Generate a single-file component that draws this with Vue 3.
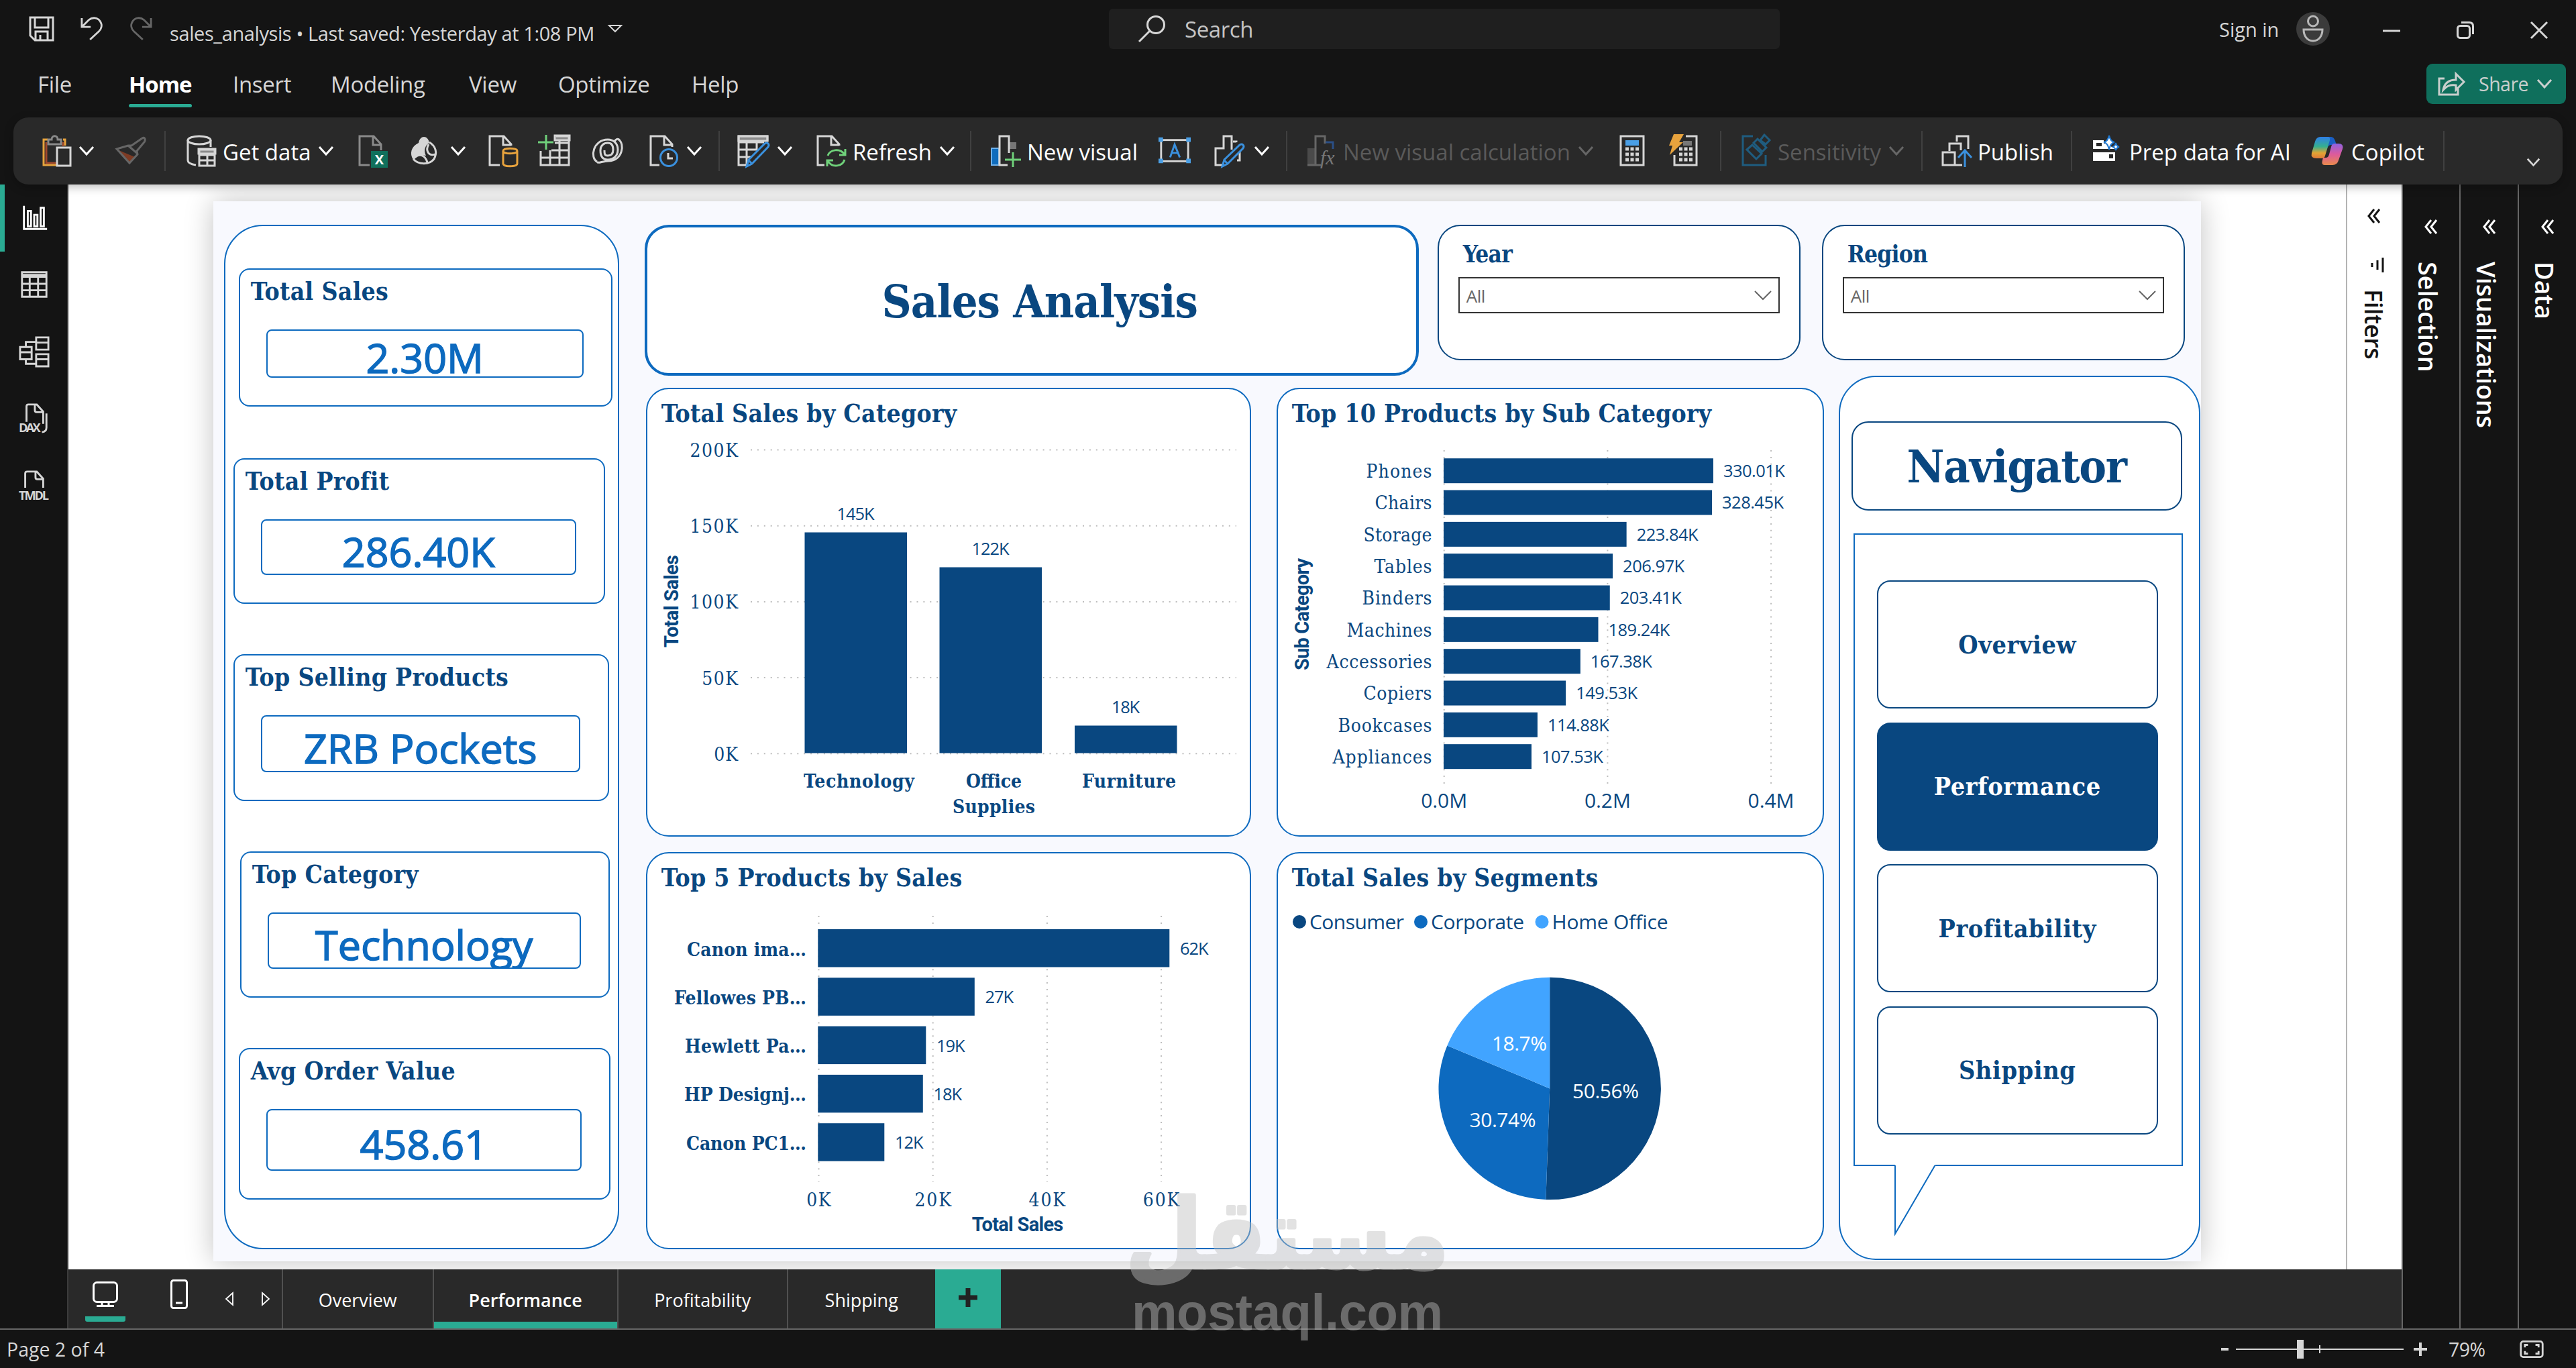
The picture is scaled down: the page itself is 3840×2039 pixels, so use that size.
<template>
  <div class="app">
    <header class="titlebar">
      <div class="quick">
        <svg class="i-save" viewBox="0 0 38 38"><path d="M2 2h34v34H9l-7-7zM9 2v15h20V2M10 36V23h18v13M17 36v-8" /></svg>
        <svg class="i-undo" viewBox="0 0 36 38"><path d="M2 2v14h14M3 15L13 5C19 0 27 1 31 7c4 6 2 12-2 16L15 36" /></svg>
        <svg class="i-redo" viewBox="0 0 36 38"><path d="M34 2v14H20M33 15L23 5C17 0 9 1 5 7c-4 6-2 12 2 16l14 13" /></svg>
        <span class="filename">sales_analysis • Last saved: Yesterday at 1:08 PM</span>
        <svg class="i-caret" viewBox="0 0 22 14"><path d="M2 2h18l-9 9z" /></svg>
      </div>
      <div class="search">
        <svg viewBox="0 0 40 40"><circle cx="26" cy="14" r="12.5" /><path d="M17 23L1 39" /></svg>
        <span>Search</span>
      </div>
      <div class="account">
        <span>Sign in</span>
        <svg class="i-avatar" viewBox="0 0 50 50">
          <circle cx="25" cy="25" r="25" class="disc" />
          <circle cx="25" cy="13.500" r="7.500" />
          <path d="M11 26h28c0 9-5 17-14 17s-14-8-14-17z" />
        </svg>
        <svg class="i-win" viewBox="0 0 26 26"><path d="M0 14h26" /></svg>
        <svg class="i-win" viewBox="0 0 26 26"><rect x="1.500" y="6.500" width="18" height="18" rx="4" /><path d="M7 1.500h12q5.500 0 5.500 5.500v12" /></svg>
        <svg class="i-win" viewBox="0 0 26 26"><path d="M1 1l24 24M25 1L1 25" /></svg>
      </div>
    </header>

    <nav class="menu">
      <a v-for="m in menu" :key="m" :class="{ active: m === 'Home' }">{{ m }}</a>
      <button class="share">
        <svg viewBox="0 0 40 36"><path d="M10 10H2v24h28V23M8 27c2-11 9-15 19-15V3l12 12-12 12v-7c-9-1-14 1-19 7z" /></svg>
        <span>Share</span>
        <svg class="chev" viewBox="0 0 24 14"><path d="M2 1l10 11L22 1" /></svg>
      </button>
    </nav>

    <div class="ribbon">
      <div class="tool">
        <svg class="ico" viewBox="0 0 48 48">
          <path class="rust" d="M7 11v31h16M32 11v6" /><path class="gold" d="M9 7H3v38h20M32 7h3v9" /><path class="line dimline" d="M10 14V7h5c0-7 9-7 9 0h5v7z" /><rect class="line" x="23" y="19" width="20" height="27" />
        </svg>
        <svg class="chev tight" viewBox="0 0 24 14"><path d="M2 1l10 11L22 1" /></svg>
      </div>
      <div class="tool dim">
        <svg class="ico" viewBox="0 0 48 48"><path class="rustfill" d="M5 23l24 10-8 9z" /><path d="M24 16L40 5q3-2 4 1t-2 6L32 24l1 5-12 13L2 21l17-5zM19 16l14 12" /></svg>
      </div>
      <i class="sep"></i>
      <div class="tool">
        <svg class="ico" viewBox="0 0 48 48">
          <ellipse cx="19" cy="8" rx="17" ry="6" /><path d="M2 8v30c0 4 5 6 12 7M36 8v10" />
          <path class="fill" d="M18 21h25v7H18z" /><path d="M19 22h23v24H19zM19 30h23M19 38h23M31 28v18" />
        </svg>
        <span>Get data</span>
        <svg class="chev" viewBox="0 0 24 14"><path d="M2 1l10 11L22 1" /></svg>
      </div>
      <div class="tool">
        <svg class="ico" viewBox="0 0 48 48">
          <path class="dimline" d="M17 45H2V2h21l11 12v9M22 2v13h12" /><rect x="19" y="24" width="25" height="25" class="excel" /><text x="31.500" y="44" class="xl">X</text>
        </svg>
      </div>
      <div class="tool">
        <svg class="ico" viewBox="0 0 48 48">
          <path class="leaf" d="M12 12C14 0 26 0 28 12c-6 3-9 11-5 19-9-2-14 0-19 6C-2 28 1 17 12 12z" />
          <path d="M28 11c10 6 12 16 7 25-7 9-23 9-31 0M27 14c-5 9-1 18 10 15M5 35c9-9 17-4 20 6" />
        </svg>
        <svg class="chev" viewBox="0 0 24 14"><path d="M2 1l10 11L22 1" /></svg>
      </div>
      <div class="tool">
        <svg class="ico" viewBox="0 0 48 48"><path d="M17 45H2V2h21l11 12v2M22 2v13h12" /><path class="amber" d="M22 24v19c0 5 21 5 21 0V24M22 24c0 5 21 5 21 0s-21-5-21 0z" /></svg>
      </div>
      <div class="tool">
        <svg class="ico" viewBox="0 0 48 48"><path class="fill" d="M25 1h22v7H25z" /><path d="M27 2h19v43H4V24M4 34h42M20 23h26M25 12h21M18 23v22M32 8v37" /><path class="green" d="M12 0v22M0 11h23" /></svg>
      </div>
      <div class="tool">
        <svg class="ico" viewBox="0 0 48 48"><path d="M7 40C-4 34 1 7 23 7c9 0 15 6 15 15s-6 15-15 15-11-7-11-14 5-11 11-11 8 4 8 10-3 9-8 9-5-3-5-8M39 7c10 6 6 32-15 32-5 0-8 1-12 2q-4 1-5-1M33 10c2-4 5-5 8-2" /></svg>
      </div>
      <div class="tool">
        <svg class="ico" viewBox="0 0 48 48"><path d="M15 45H2V2h21l11 12v4M22 2v13h12" /><circle class="blue" cx="29" cy="34" r="12.500" /><path d="M28 27v8h7" /></svg>
        <svg class="chev tight" viewBox="0 0 24 14"><path d="M2 1l10 11L22 1" /></svg>
      </div>
      <i class="sep"></i>
      <div class="tool">
        <svg class="ico" viewBox="0 0 48 48"><path class="fill" d="M2 2h43v7H2z" /><path d="M14 45H2V2h43v8M2 11h38M2 22h28M2 33h20M14 11v34M29 11v11" /><path class="blue" d="M14 47l3-10 24-24q3-2 5 0t0 5L22 43zM17 38l5 5" /></svg>
        <svg class="chev" viewBox="0 0 24 14"><path d="M2 1l10 11L22 1" /></svg>
      </div>
      <div class="tool">
        <svg class="ico" viewBox="0 0 48 48"><path d="M12 45H2V2h21l11 12v2M22 2v13h12" /><path class="green" d="M17 31c3-9 18-12 25-2M43 21v9h-9M42 37c-3 10-18 13-25 2M16 47v-9h9" /></svg>
        <span>Refresh</span>
        <svg class="chev" viewBox="0 0 24 14"><path d="M2 1l10 11L22 1" /></svg>
      </div>
      <i class="sep"></i>
      <div class="tool">
        <svg class="ico" viewBox="0 0 48 48"><path class="bluefill" d="M1 20h11v25H1z" /><path class="greyfill" d="M28 11h10v10H28z" /><path d="M27 27V2H13v43h12" /><path class="green" d="M33 26v22M21 37h24" /></svg>
        <span>New visual</span>
      </div>
      <div class="tool">
        <svg class="ico" viewBox="0 0 50 48"><rect x="4" y="7" width="42" height="33" /><path class="bluesolid" d="M0 3h7v7H0zM43 3h7v7h-7zM0 36h7v7H0zM43 36h7v7h-7z" /><path class="blue" d="M18 34l7-20 8 20M21 27h9" /></svg>
      </div>
      <div class="tool">
        <svg class="ico" viewBox="0 0 48 48"><path d="M15 45H2V20h12V2h12v20M33 11v-1h-5M34 38h4v-13M2 32v13" /><path class="blue" d="M12 47l3-10 23-22q3-2 5 0t0 5L20 43zM15 38l5 5" /></svg>
        <svg class="chev" viewBox="0 0 24 14"><path d="M2 1l10 11L22 1" /></svg>
      </div>
      <i class="sep"></i>
      <div class="tool dim">
        <svg class="ico" viewBox="0 0 48 48"><path class="greyfill" d="M1 20h11v25H1z" /><path d="M27 13V2H13v43h8M1 45h12" /><path d="M28 11h11v10" class="navy" /><text x="20" y="44" class="fx">fx</text></svg>
        <span>New visual calculation</span>
        <svg class="chev" viewBox="0 0 24 14"><path d="M2 1l10 11L22 1" /></svg>
      </div>
      <div class="tool">
        <svg class="ico" viewBox="0 0 48 48"><rect x="2" y="2" width="34" height="43" /><path class="bluesolid" d="M9 8h20v8H9z" /><path class="keys" d="M9 21h20M9 29h20M9 37h20" /></svg>
      </div>
      <div class="tool">
        <svg class="ico" viewBox="0 0 48 48"><path d="M25 2h16v43H8V30" /><path class="greyfill" d="M21 9h13v7H21z" /><path class="keys" d="M15 21h20M15 29h20M15 37h20" /><path class="goldfill" d="M7-1h15l-7 12h6L1 30l4-14H0z" /></svg>
      </div>
      <i class="sep"></i>
      <div class="tool dim">
        <svg class="ico" viewBox="0 0 48 48"><path class="teal" d="M17 2H2v43h34V30M8 22l8-7 14 13-8 8zM18 12l6-6 13 13-6 6zM28 8l6-8 8 8-6 6z" /></svg>
        <span>Sensitivity</span>
        <svg class="chev" viewBox="0 0 24 14"><path d="M2 1l10 11L22 1" /></svg>
      </div>
      <i class="sep"></i>
      <div class="tool">
        <svg class="ico" viewBox="0 0 48 48"><path d="M23 10V2h17v19M12 24V13h17v10M31 45H2V26h18v19M29 13v8" /><path class="blue" d="M35 48V24M25 34l10-11 10 11" /></svg>
        <span>Publish</span>
      </div>
      <i class="sep"></i>
      <div class="tool">
        <svg class="ico" viewBox="0 0 48 48"><path class="white" d="M0 8h16v5h5l7 5h5v3H0zM0 26h33v13H0z" /><path class="dark" d="M5 12h8v5H5zM24 29h6v6h-6z" /><path class="spark" d="M24 1q2 9 8 10-6 1-8 11-2-10-8-11 6-1 8-10zM34 12q1 5 5 6-4 1-5 5-1-4-5-5 4-1 5-6z" /></svg>
        <span>Prep data for AI</span>
      </div>
      <div class="tool">
        <svg class="ico" viewBox="0 0 48 48">
          <defs>
            <linearGradient id="cpA" x1="0" y1="0" x2="0" y2="1"><stop offset="0" stop-color="#2f7fe8" /><stop offset=".45" stop-color="#35b08f" /><stop offset=".75" stop-color="#e2a433" /><stop offset="1" stop-color="#e07a3a" /></linearGradient>
            <linearGradient id="cpB" x1="0" y1="0" x2="0" y2="1"><stop offset="0" stop-color="#8f62e0" /><stop offset=".5" stop-color="#dd5a9b" /><stop offset="1" stop-color="#e98a4c" /></linearGradient>
          </defs>
          <path class="solid" fill="#1a5fc4" d="M22 3h8q4 0 6 6l2 6h-8q-4 0-6 5z" />
          <path class="solid" fill="url(#cpA)" d="M14 3h11q4 0 3 5l-7 23q-1 4-5 4H8q-9 0-7-8L6 10q2-7 8-7z" />
          <path class="solid" fill="url(#cpB)" d="M35 13h6q8 0 6 8l-6 17q-2 7-9 7H20q-5 0-3-7l1-4h4q4 0 5-5l3-11q1-5 5-5z" />
        </svg>
        <span class="wide">Copilot</span>
      </div>
      <i class="sep"></i>
      <svg class="chev collapse" viewBox="0 0 24 14"><path d="M2 1l10 11L22 1" /></svg>
    </div>

    <div class="body">
      <aside class="rail">
        <div class="rail-item active">
          <svg viewBox="0 0 48 48"><path d="M8 6v36h36M14 14h5v24h-5zM24 20h5v18h-5zM34 9h5v29h-5z" /></svg>
        </div>
        <div class="rail-item">
          <svg viewBox="0 0 48 48"><path d="M5 5h38v38H5zM5 12h38M5 23h38M5 33h38M17 12v31M30 12v31M5 9h38" /></svg>
        </div>
        <div class="rail-item">
          <svg viewBox="0 0 48 48"><path d="M2 17h18v19H2zM2 25h18M27 2h19v19H27zM27 10h19M27 28h19v19H27zM27 36h19M11 17v-8h16M11 36v7h16" /></svg>
        </div>
        <div class="rail-item">
          <svg viewBox="0 0 48 48"><path d="M12 29V5q0-3 3-3h13l10 11v14M25 2v9q0 3 3 3h10M43 16v22q0 6-7 7M38 27v5" /><text x="0" y="45" textLength="34">DAX</text></svg>
        </div>
        <div class="rail-item">
          <svg viewBox="0 0 48 48"><path d="M10 27V5q0-3 3-3h15l10 11v14M26 2v9q0 3 3 3h9" /><text x="0" y="46" textLength="47">TMDL</text></svg>
        </div>
      </aside>

      <div class="center">
        <div class="stage">
          <div class="canvas">
            <div class="report">
              <section class="kpis">
                <article v-for="k in kpis" :key="k.label" class="kpi">
                  <h3>{{ k.label }}</h3>
                  <div class="value">{{ k.value }}</div>
                </article>
              </section>

              <div class="board">
                <div class="top-row">
                  <h1 class="report-title">Sales Analysis</h1>
                  <div v-for="s in ['Year', 'Region']" :key="s" class="slicer">
                    <h3>{{ s }}</h3>
                    <div class="select">
                      <span>All</span>
                      <svg viewBox="0 0 26 16"><path d="M1 1l12 12L25 1" /></svg>
                    </div>
                  </div>
                </div>

                <div class="lower">
                  <div class="charts">
                    <section class="card">
                      <h2>Total Sales by Category</h2>
                      <svg width="898" height="599" class="chart">
                        <g v-for="(t, i) in ['200K', '150K', '100K', '50K', '0K']" :key="t">
                          <line class="grid" x1="154" x2="878" :y1="24.500 + i * 113.200" :y2="24.500 + i * 113.200" />
                          <text class="serif end" x="135" :y="35 + i * 113.200" :textLength="t.length * 17.900">{{ t }}</text>
                        </g>
                        <g v-for="c in categories" :key="c.value">
                          <rect class="bar" :x="c.x" :y="c.top" width="152.500" :height="476.500 - c.top" />
                          <text class="num mid" :x="c.x + 76" :y="c.top - 19" :textLength="c.w">{{ c.value }}</text>
                          <text v-for="(l, i) in c.lines" :key="l.t" class="serif bold mid" :x="c.x + 81" :y="528 + i * 37.500" :textLength="l.w">{{ l.t }}</text>
                        </g>
                        <text class="axis mid" transform="translate(46 250) rotate(-90)" textLength="138">Total Sales</text>
                      </svg>
                    </section>

                    <section class="card">
                      <h2>Top 10 Products by Sub Category</h2>
                      <svg width="812" height="599" class="chart">
                        <g v-for="(t, i) in ['0.0M', '0.2M', '0.4M']" :key="t">
                          <line class="grid" :x1="247.700 + i * 243.700" :x2="247.700 + i * 243.700" y1="25" y2="523" />
                          <text class="tick mid" :x="247.700 + i * 243.700" y="558" textLength="69">{{ t }}</text>
                        </g>
                        <g v-for="(p, i) in subCategories" :key="p.name">
                          <text class="serif end" x="229.500" :y="66 + i * 47.330" :textLength="p.w">{{ p.name }}</text>
                          <rect class="bar" x="247" :y="37.200 + i * 47.330" :width="p.value * 1.218" height="37" />
                          <text class="num" :x="262 + p.value * 1.218" :y="65 + i * 47.330" textLength="92">{{ p.value.toFixed(2) }}K</text>
                        </g>
                        <text class="axis mid" transform="translate(46 269.500) rotate(-90)" textLength="167">Sub Category</text>
                      </svg>
                    </section>

                    <section class="card">
                      <h2>Top 5 Products by Sales</h2>
                      <svg width="898" height="522" class="chart">
                        <g v-for="(t, i) in ['0K', '20K', '40K', '60K']" :key="t">
                          <line class="grid" :x1="255.500 + i * 170.200" :x2="255.500 + i * 170.200" y1="27" y2="424" />
                          <text class="serif mid" :x="255.500 + i * 170.200" y="459.500" :textLength="t.length * 18.200">{{ t }}</text>
                        </g>
                        <g v-for="(p, i) in products" :key="p.name">
                          <text class="serif bold end" x="237" :y="86.500 + i * 72.300" :textLength="p.w">{{ p.name }}</text>
                          <rect class="bar" x="254.300" :y="47 + i * 72.300" :width="p.bar" height="56.500" />
                          <text class="num" :x="270 + p.bar" :y="85 + i * 72.300" textLength="42.500">{{ p.value }}</text>
                        </g>
                        <text class="axis mid" x="552" y="497" textLength="136.500">Total Sales</text>
                      </svg>
                    </section>

                    <section class="card">
                      <h2>Total Sales by Segments</h2>
                      <svg width="812" height="522" class="chart">
                        <g v-for="s in slices" :key="s.name">
                          <circle :cx="s.lx - 16" cy="36" r="10" :fill="s.color" />
                          <text class="tick" :x="s.lx - 1" y="47.400" :textLength="s.lw">{{ s.name }}</text>
                          <path :d="s.d" :fill="s.color" />
                        </g>
                        <text v-for="s in slices" :key="s.pct" class="tick mid pct" :x="s.tx" :y="s.ty" :textLength="s.tw">{{ s.pct }}%</text>
                      </svg>
                    </section>
                  </div>

                  <section class="navigator">
                    <h2>Navigator</h2>
                    <div class="callout">
                      <button v-for="p in pages" :key="p" :class="{ active: p === 'Performance' }">{{ p }}</button>
                      <svg class="tail" viewBox="0 0 62 106"><path class="cover" d="M2 0h58v3H2z" /><path d="M1 1v102L60.500 1" /></svg>
                    </div>
                  </section>
                </div>
              </div>
            </div>
          </div>

          <aside class="filters">
            <svg class="dbl" viewBox="0 0 20 22"><path d="M10 1L2 11l8 10M18 1l-8 10 8 10" /></svg>
            <svg class="funnel" viewBox="0 0 22 24"><path d="M20 1v22M12 5v14M4 9v6" /></svg>
            <span>Filters</span>
          </aside>
        </div>

        <footer class="tabs">
          <div class="views">
            <div class="view on">
              <svg class="desk" viewBox="0 0 38 38"><rect x="1.500" y="1.500" width="35" height="29" rx="5" /><path d="M14 31v5M24 31v5M6 36.500h26" /></svg>
            </div>
            <svg class="phone" viewBox="0 0 26 44"><rect x="1.500" y="1.500" width="23" height="41" rx="3" /><path d="M8 35h10" /></svg>
            <svg class="tri" viewBox="0 0 14 22"><path d="M12 2v18L2 11z" /></svg>
            <svg class="tri next" viewBox="0 0 14 22"><path d="M2 2v18l10-9z" /></svg>
          </div>
          <div v-for="p in pages" :key="p" class="tab" :class="{ active: p === 'Performance' }">{{ p }}</div>
          <div class="add"><svg viewBox="0 0 28 28"><path d="M14 0v28M0 14h28" /></svg></div>
        </footer>
      </div>

      <aside v-for="p in ['Selection', 'Visualizations', 'Data']" :key="p" class="pane">
        <svg class="dbl" viewBox="0 0 20 22"><path d="M10 1L2 11l8 10M18 1l-8 10 8 10" /></svg>
        <span>{{ p }}</span>
      </aside>
    </div>

    <footer class="status">
      <span>Page 2 of 4</span>
      <div class="zoom">
        <svg width="310" height="32" viewBox="0 0 310 32"><path class="thick" d="M1 16h11M288 16h20M298 6v20" /><path d="M23 16h250M148 10v12" /><path class="thumb" d="M114 2h10v28h-10z" /></svg>
        <span>79%</span>
        <svg class="fit" viewBox="0 0 38 28"><rect x="1.500" y="1.500" width="35" height="25" rx="4" /><path d="M8 11V7h5M25 7h5v4M30 17v4h-5M13 21H8v-4" /></svg>
      </div>
    </footer>

    <div class="watermark">
      <svg width="470" height="240">
        <text x="232" y="112" class="ar" textLength="482" lengthAdjust="spacingAndGlyphs">مستقل</text>
        <text x="232" y="204" class="en" textLength="464">mostaql.com</text>
      </svg>
    </div>
  </div>
</template>

<script setup>
const menu = ['File', 'Home', 'Insert', 'Modeling', 'View', 'Optimize', 'Help']
const pages = ['Overview', 'Performance', 'Profitability', 'Shipping']

const kpis = [
  { label: 'Total Sales', value: '2.30M' },
  { label: 'Total Profit', value: '286.40K' },
  { label: 'Top Selling Products', value: 'ZRB Pockets' },
  { label: 'Top Category', value: 'Technology' },
  { label: 'Avg Order Value', value: '458.61' },
]

const categories = [
  { x: 234.5, top: 147.5, value: '145K', w: 56, lines: [{ t: 'Technology', w: 165 }] },
  { x: 435.5, top: 199.5, value: '122K', w: 56, lines: [{ t: 'Office', w: 83 }, { t: 'Supplies', w: 123 }] },
  { x: 637, top: 435.5, value: '18K', w: 42, lines: [{ t: 'Furniture', w: 140 }] },
]

const subCategories = [
  { name: 'Phones', value: 330.01, w: 98 },
  { name: 'Chairs', value: 328.45, w: 85 },
  { name: 'Storage', value: 223.84, w: 102 },
  { name: 'Tables', value: 206.97, w: 86 },
  { name: 'Binders', value: 203.41, w: 104 },
  { name: 'Machines', value: 189.24, w: 127 },
  { name: 'Accessories', value: 167.38, w: 157 },
  { name: 'Copiers', value: 149.53, w: 102 },
  { name: 'Bookcases', value: 114.88, w: 140 },
  { name: 'Appliances', value: 107.53, w: 148 },
]

const products = [
  { name: 'Canon ima…', value: '62K', bar: 524, w: 178 },
  { name: 'Fellowes PB…', value: '27K', bar: 233.5, w: 197 },
  { name: 'Hewlett Pa…', value: '19K', bar: 161, w: 181 },
  { name: 'HP Designj…', value: '18K', bar: 156.5, w: 182 },
  { name: 'Canon PC1…', value: '12K', bar: 99, w: 179 },
]

const segments = [
  { name: 'Consumer', pct: 50.56, color: '#094780', lx: 48, lw: 141, tx: 488.5, ty: 298.5, tw: 99 },
  { name: 'Corporate', pct: 30.74, color: '#0d6abf', lx: 229, lw: 139, tx: 335, ty: 341.5, tw: 99 },
  { name: 'Home Office', pct: 18.7, color: '#41a4ff', lx: 409.5, lw: 173, tx: 360, ty: 227.5, tw: 82 },
]

const cx = 405.2
const cy = 284.4
const r = 165.7
const point = (pct) => {
  const a = (pct / 100) * Math.PI * 2
  return `${cx + r * Math.sin(a)} ${cy - r * Math.cos(a)}`
}

let start = 0
const slices = segments.map((s) => {
  const end = start + s.pct
  const d = `M${cx} ${cy}L${point(start)}A${r} ${r} 0 ${s.pct > 50 ? 1 : 0} 1 ${point(end)}Z`
  start = end
  return { ...s, d }
})
</script>

<style>
body {
  background: #141414;
  overflow: hidden;
}
</style>

<style scoped>
* {
  box-sizing: border-box;
}

.app {
  position: relative;
  height: 2039px;
  display: flex;
  flex-direction: column;
  background: #141414;
  color: #d6d6d6;
  font-family: 'Open Sans', 'Noto Sans', sans-serif;
  font-size: 33px;
  white-space: nowrap;
}

svg {
  display: block;
  flex: none;
  overflow: visible;
  fill: none;
  stroke: #d6d6d6;
  stroke-width: 3;
}

svg text {
  stroke: none;
}

button {
  font: inherit;
  color: inherit;
  border: none;
}

h1,
h2,
h3 {
  margin: 0;
  color: #094780;
  font-family: 'DejaVu Serif Condensed', 'DejaVu Serif', serif;
  font-stretch: condensed;
  font-weight: 700;
}

/* title bar */
.titlebar {
  height: 86px;
  display: grid;
  grid-template-columns: 1653px 1000px 1fr;
  align-items: center;
}

.quick {
  display: flex;
  align-items: center;
  padding-left: 43px;
}

.i-save {
  width: 38px;
  height: 38px;
}

.i-undo,
.i-redo {
  width: 34px;
  height: 38px;
  margin-left: 39px;
}

.i-redo {
  stroke: #666;
}

.filename {
  width: 636px;
  margin-left: 26px;
  padding-top: 13px;
  font-size: 29px;
  letter-spacing: -0.400px;
}

.i-caret {
  width: 22px;
  height: 14px;
  margin-left: 17px;
  stroke-width: 2;
}

.search {
  height: 60px;
  display: flex;
  align-items: center;
  padding-left: 44px;
  border-radius: 6px;
  background: #1f1f1f;
  color: #c4c4c4;
}

.search svg {
  width: 40px;
  height: 40px;
  margin-right: 29px;
}

.search span {
  padding-top: 1px;
  letter-spacing: -0.400px;
}

.account {
  display: flex;
  align-items: center;
  padding-left: 655px;
  font-size: 29px;
}

.account span {
  width: 88px;
}

.i-avatar {
  width: 50px;
  height: 50px;
  margin: 0 -5px 0 27px;
  stroke: #b8b8b8;
}

.i-avatar .disc {
  fill: #3b3b3b;
  stroke: none;
}

.i-win {
  width: 26px;
  height: 26px;
  margin: 4px 0 0 84px;
}

/* menu */
.menu {
  height: 89px;
  display: grid;
  grid-template-columns: 136px 155px 146px 206px 133px 199px 2586px 208px;
  justify-items: start;
  padding-left: 56px;
}

.menu a {
  position: relative;
  height: 50px;
  margin-top: 15px;
  line-height: 50px;
  letter-spacing: -0.300px;
}

.menu a.active {
  color: #fff;
  font-weight: 700;
  letter-spacing: -1px;
}

.menu a.active::after {
  content: '';
  position: absolute;
  left: 0;
  right: 0;
  top: 54px;
  height: 5px;
  border-radius: 3px;
  background: #2aab93;
}

.share {
  width: 208px;
  height: 60px;
  margin-top: 9px;
  padding: 0 0 0 17px;
  display: flex;
  align-items: center;
  border-radius: 9px;
  background: #0f6f5c;
  color: #c9cfcd;
  font-size: 28.500px;
}

.share svg {
  width: 40px;
  height: 36px;
  stroke: #c9cfcd;
}

.share span {
  width: 74px;
  margin-left: 21px;
  letter-spacing: -0.500px;
}

.share .chev {
  width: 24px;
  height: 14px;
  margin-left: 12px;
}

/* ribbon */
.ribbon {
  position: relative;
  z-index: 1;
  height: 100px;
  margin: 0 20px;
  padding-left: 42px;
  display: grid;
  grid-template-columns: 110px 73px 33px 256px 78px 116px 74px 81px 85px 103px 28px 118px 229px 31px 250px 83px 107px 31px 466px 74px 76px 32px 268px 30px 193px 33px 325px 197px 124px 1fr;
  align-items: center;
  border-radius: 22px;
  background: #292929;
  color: #fff;
  box-shadow: 0 4px 14px rgba(0, 0, 0, 0.25);
}

.tool {
  display: flex;
  align-items: center;
}

.tool span {
  margin-left: 6px;
  padding-top: 2px;
}

.tool .wide {
  margin-left: 12px;
}

.ico {
  width: 48px;
  height: 48px;
}

.chev {
  width: 24px;
  height: 14px;
  margin-left: 11px;
  stroke: #fff;
}

.tight {
  margin-left: 7px;
}

.collapse {
  width: 21px;
  margin: 33px 0 0;
  stroke: #d6d6d6;
}

.sep {
  width: 2px;
  height: 60px;
  background: #404040;
}

.dim {
  color: #5a5a5a;
}

.dim svg {
  stroke: #666;
}

.gold {
  stroke: #e8a33d;
}

.goldfill {
  fill: #e8a33d;
  stroke: none;
}

.line {
  fill: #292929;
}

.dimline {
  stroke: #8a8a8a;
}

.rust {
  stroke: #a0492c;
}

.rustfill {
  fill: #7d3b24;
  stroke: none;
}

.fill {
  fill: #8a8a8a;
}

.leaf {
  fill: #d6d6d6;
  stroke: none;
}

.solid {
  stroke: none;
}

.greyfill {
  fill: #777;
  stroke: none;
}

.dim .greyfill {
  fill: #4a4a4a;
}

.excel {
  fill: #10705c;
  stroke: none;
}

.xl {
  fill: #fff;
  font-size: 20px;
  font-weight: 700;
  text-anchor: middle;
}

.fx {
  fill: #777;
  font: italic 30px 'Liberation Serif', serif;
}

.amber {
  stroke: #e8a33d;
}

.green {
  stroke: #6fd07a;
}

.blue {
  stroke: #3a90dd;
}

.bluefill {
  fill: #0f6cbd;
  stroke: #6fb1ea;
  stroke-width: 2;
}

.bluesolid {
  fill: #4a9fe6;
  stroke: none;
}

.navy {
  stroke: #2b4f86;
}

.teal {
  stroke: #1f5c7f;
}

.keys {
  stroke-width: 5;
  stroke-dasharray: 5 2.500;
}

.white {
  fill: #fff;
  stroke: none;
}

.dark {
  fill: #292929;
  stroke: none;
}

.spark {
  fill: #fff;
  stroke: #1f78d1;
  stroke-width: 2;
}

/* body */
.body {
  height: 1705px;
  display: flex;
}

.rail {
  width: 102px;
  border-right: 2px solid #3c3c3c;
}

.rail-item {
  height: 100px;
  padding: 0 0 3px 27px;
  display: flex;
  align-items: center;
}

.rail-item.active {
  border-left: 7px solid #2aab93;
  padding-left: 20px;
}

.rail-item svg {
  width: 48px;
  height: 46px;
}

.rail-item text {
  fill: #d6d6d6;
  font-size: 19px;
  font-weight: 700;
}

.rail-item.active svg {
  stroke: #fff;
}

.center {
  width: 3478px;
}

.stage {
  height: 1617px;
  display: flex;
  background: #fff;
}

.canvas {
  width: 3395px;
  padding: 25px 0 0 216px;
  overflow: hidden;
}

.report {
  width: 2963px;
  height: 1580px;
  display: flex;
  gap: 38px;
  padding: 35px 0 0 16px;
  background: #f8f9fe;
  box-shadow: 0 0 40px rgba(0, 0, 0, 0.24);
}

.kpis {
  width: 589px;
  height: 1527px;
  border: 2px solid #0d6abf;
  border-radius: 58px;
  background: #fff;
}

.kpi {
  display: flex;
  flex-direction: column;
  border: 2px solid #0d6abf;
  border-radius: 16px;
}

.kpi:nth-child(1) {
  width: 557px;
  height: 206px;
  margin: 63px 0 0 20px;
}

.kpi:nth-child(2) {
  width: 554px;
  height: 217px;
  margin: 77px 0 0 12px;
}

.kpi:nth-child(3) {
  width: 560px;
  height: 219px;
  margin: 75px 0 0 12px;
}

.kpi:nth-child(4) {
  width: 551px;
  height: 218px;
  margin: 75px 0 0 22px;
}

.kpi:nth-child(5) {
  width: 554px;
  height: 226px;
  margin: 75px 0 0 20px;
}

.kpi h3 {
  height: 89px;
  padding-left: 16px;
  font-size: 37px;
  line-height: 64px;
  letter-spacing: 0.300px;
}

.value {
  flex: 1;
  margin: 0 41px 41px 39px;
  padding-top: 12px;
  display: flex;
  align-items: center;
  justify-content: center;
  overflow: hidden;
  border: 2px solid #0d6abf;
  border-radius: 8px;
  color: #0d6abf;
  font-size: 61px;
  line-height: 54px;
  -webkit-text-stroke: 1.500px #0d6abf;
}

.top-row {
  display: flex;
  align-items: flex-start;
  height: 225px;
}

.report-title {
  width: 1154px;
  height: 225px;
  padding-left: 24px;
  border: 4px solid #0d6abf;
  border-radius: 36px;
  background: #fff;
  font-size: 68px;
  line-height: 220px;
  letter-spacing: -1px;
  text-align: center;
}

.slicer {
  width: 541px;
  height: 202px;
  margin-left: 28px;
  padding: 20px 29px;
  border: 2px solid #094780;
  border-radius: 34px;
  background: #fff;
}

.slicer + .slicer {
  margin-left: 32px;
}

.slicer h3 {
  height: 56px;
  padding-left: 7px;
  font-size: 35px;
  line-height: 44px;
  letter-spacing: -0.800px;
}

.select {
  height: 54px;
  padding: 2px 10px 0;
  display: flex;
  align-items: center;
  justify-content: space-between;
  border: 2px solid #333;
  color: #666;
  font-size: 26px;
  letter-spacing: -0.500px;
}

.select svg {
  width: 26px;
  height: 16px;
  stroke: #666;
  stroke-width: 2;
}

.lower {
  display: flex;
}

.charts {
  display: grid;
  grid-template-columns: 902px 816px;
  grid-template-rows: 669px 592px;
  gap: 23px 38px;
  padding: 18px 0 0 2px;
  align-content: start;
}

.card {
  border: 2px solid #0d6abf;
  border-radius: 34px;
  background: #fff;
}

.card h2 {
  height: 66px;
  padding-left: 21px;
  font-size: 37px;
  line-height: 72px;
  letter-spacing: 0.250px;
}

.chart {
  stroke: none;
  fill: #094780;
}

.chart .grid {
  stroke: #bdbdbd;
  stroke-width: 2;
  stroke-dasharray: 2 7.900;
}

.serif {
  font-family: 'DejaVu Serif Condensed', 'DejaVu Serif', serif;
  font-stretch: condensed;
  font-size: 28px;
}

.bold {
  font-weight: 700;
}

.num {
  font-size: 25.500px;
}

.tick {
  font-size: 30px;
}

.axis {
  font-family: Roboto, sans-serif;
  font-size: 29px;
  font-weight: 700;
}

.pct {
  fill: #fff;
}

.end {
  text-anchor: end;
}

.mid {
  text-anchor: middle;
}

.navigator {
  width: 539px;
  height: 1318px;
  margin-left: 22px;
  padding: 66px 18px 0;
  border: 2px solid #0d6abf;
  border-radius: 56px;
  background: #fff;
}

.navigator h2 {
  width: 493px;
  height: 133px;
  margin-left: -1px;
  border: 2px solid #094780;
  border-radius: 25px;
  font-size: 68px;
  line-height: 130px;
  letter-spacing: -1.200px;
  text-align: center;
}

.callout {
  position: relative;
  width: 491px;
  height: 943px;
  margin: 34px 0 0 2px;
  padding: 68px 33px 0;
  display: flex;
  flex-direction: column;
  gap: 20.500px;
  border: 2px solid #0d6abf;
}

.callout button {
  flex: none;
  width: 419px;
  height: 191px;
  border: 2px solid #094780;
  border-radius: 20px;
  background: #fff;
  color: #094780;
  font-family: 'DejaVu Serif Condensed', 'DejaVu Serif', serif;
  font-stretch: condensed;
  font-size: 37.500px;
  font-weight: 700;
  letter-spacing: 0.600px;
}

.callout button.active {
  background: #094780;
  color: #fff;
}

.tail {
  position: absolute;
  left: 59px;
  bottom: -106px;
  width: 62px;
  height: 106px;
  stroke: #0d6abf;
  stroke-width: 2;
}

.tail .cover {
  fill: #fff;
  stroke: #fff;
}

/* side panes */
.filters,
.pane {
  display: flex;
  flex-direction: column;
  align-items: center;
}

.filters {
  width: 83px;
  padding-top: 36px;
  border-left: 2px solid #b4b4b4;
  background: #fff;
  color: #141414;
}

.filters svg {
  stroke: #141414;
}

.dbl {
  width: 20px;
  height: 22px;
}

.funnel {
  width: 22px;
  height: 24px;
  margin: 50px 0 0 8px;
}

.filters span,
.pane span {
  writing-mode: vertical-rl;
  font-size: 38px;
  font-weight: 600;
  line-height: 50px;
}

.filters span {
  margin: 24px 2px 0 0;
  font-size: 36px;
  letter-spacing: -0.400px;
}

.pane {
  width: 87px;
  padding-top: 52px;
  border-left: 2px solid #666;
  color: #fff;
}

.pane svg {
  stroke: #fff;
}

.pane span {
  margin: 41px 8px 0 0;
  letter-spacing: -0.300px;
}

/* page tabs */
.tabs {
  height: 88px;
  display: grid;
  grid-template-columns: 318px 225px 275px 253px 221px 98px;
  background: #292929;
  color: #fff;
  font-size: 27px;
}

.tabs svg {
  stroke: #fff;
}

.views {
  display: flex;
  align-items: flex-start;
  padding: 15px 0 0 25px;
}

.view {
  width: 60px;
  height: 63px;
  padding: 3px 0 0 11px;
  border-bottom: 8px solid #2aab93;
  border-radius: 3px;
}

.desk {
  width: 38px;
  height: 38px;
}

.phone {
  width: 26px;
  height: 44px;
  margin-left: 67px;
}

.tri {
  width: 14px;
  height: 22px;
  margin: 18px 0 0 55px;
}

.views .tri {
  stroke-width: 1.800;
}

.views .next {
  margin-left: 40px;
}

.tab {
  position: relative;
  display: flex;
  align-items: center;
  justify-content: center;
  padding-top: 2px;
  border-left: 2px solid #505050;
}

.tab.active {
  font-weight: 600;
}

.tab.active::after {
  content: '';
  position: absolute;
  left: 0;
  right: 0;
  bottom: 0;
  height: 10px;
  background: #2aab93;
}

.add {
  display: flex;
  justify-content: center;
  padding-top: 28px;
  background: #2aab93;
}

.add svg {
  width: 28px;
  height: 28px;
  stroke: #222;
  stroke-width: 7;
}

/* status bar */
.status {
  height: 59px;
  display: flex;
  align-items: center;
  justify-content: space-between;
  padding: 0 47px 0 10px;
  border-top: 2px solid #666;
  font-size: 28.500px;
}

.zoom {
  display: flex;
  align-items: center;
}

.zoom svg {
  stroke-width: 2;
}

.zoom .thick {
  stroke-width: 4;
}

.zoom .thumb {
  fill: #d6d6d6;
  stroke: none;
}

.zoom span {
  width: 56px;
  margin: 0 49px 0 30px;
  letter-spacing: -0.500px;
}

.zoom .fit {
  width: 38px;
  height: 26px;
  stroke-width: 3;
}

/* site mark over the lower edge */
.watermark {
  position: absolute;
  left: 1687px;
  top: 1778px;
  z-index: 2;
  opacity: 0.440;
}

.watermark text {
  fill: #bfbfbf;
  font-weight: 700;
  text-anchor: middle;
}

.watermark .ar {
  stroke: #bfbfbf;
  stroke-width: 5;
  stroke-linejoin: round;
  font-family: 'DejaVu Sans', sans-serif;
  font-size: 144px;
}

.en {
  font-family: 'Liberation Sans', sans-serif;
  font-size: 76px;
}
</style>
